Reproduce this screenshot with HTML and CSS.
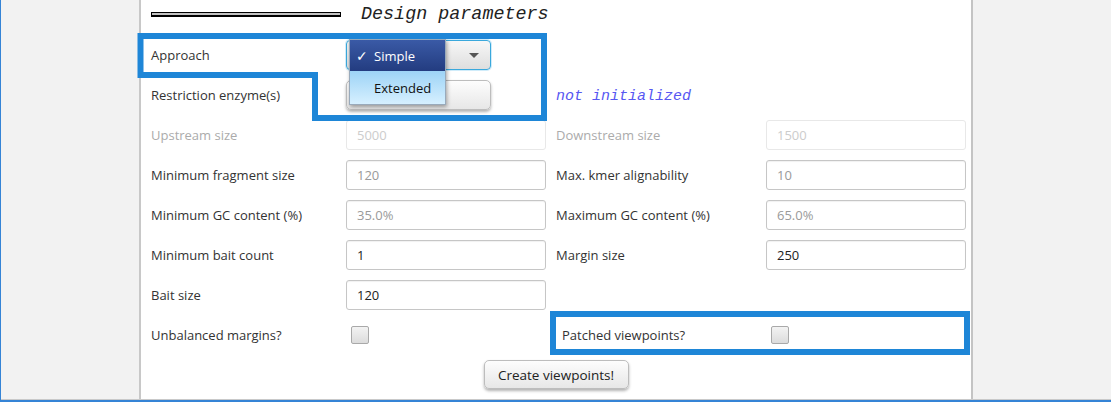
FILE: index.html
```html
<!DOCTYPE html>
<html lang="en">
<head>
<meta charset="utf-8">
<title>Design parameters</title>
<link rel="stylesheet" href="styles.css">
</head>
<body>
<div class="app">
  <div class="main">
    <section class="panel">
      <div class="header">
        <div class="rule"></div>
        <h2 class="title">Design parameters</h2>
      </div>
      <div class="form">
        <span class="lbl">Approach</span>
        <div class="combo-cell">
          <div class="combo"><span class="arrow"></span></div>
          <ul class="popup">
            <li class="item sel"><span class="check">✓</span><span class="txt">Simple</span></li>
            <li class="item alt"><span class="check"></span><span class="txt">Extended</span></li>
          </ul>
        </div>
        <span></span><span></span>

        <span class="lbl">Restriction enzyme(s)</span>
        <div><button class="btn enzyme" type="button"></button></div>
        <span class="status">not initialized</span><span></span>

        <span class="lbl off">Upstream size</span>
        <input class="field" type="text" value="5000" disabled>
        <span class="lbl off">Downstream size</span>
        <input class="field" type="text" value="1500" disabled>

        <span class="lbl">Minimum fragment size</span>
        <input class="field" type="text" placeholder="120">
        <span class="lbl">Max. kmer alignability</span>
        <input class="field" type="text" placeholder="10">

        <span class="lbl">Minimum GC content (%)</span>
        <input class="field" type="text" placeholder="35.0%">
        <span class="lbl">Maximum GC content (%)</span>
        <input class="field" type="text" placeholder="65.0%">

        <span class="lbl">Minimum bait count</span>
        <input class="field" type="text" value="1">
        <span class="lbl">Margin size</span>
        <input class="field" type="text" value="250">

        <span class="lbl">Bait size</span>
        <input class="field" type="text" value="120">
        <span></span><span></span>

        <span class="lbl">Unbalanced margins?</span>
        <div><span class="box"></span></div>
        <span class="lbl shift">Patched viewpoints?</span>
        <div><span class="box"></span></div>
      </div>
      <div class="actions">
        <button class="btn create" type="button">Create viewpoints!</button>
      </div>
    </section>
  </div>
  <svg class="annot" width="1111" height="402" viewBox="0 0 1111 402">
    <path d="M140.5 36 H544 V118 H315 V75 H140.5 Z" />
    <rect x="553" y="314" width="414" height="38" />
  </svg>
</div>
</body>
</html>
```

FILE: styles.css
```css
html, body {
  margin: 0;
  padding: 0;
}
body {
  width: 1111px;
  height: 402px;
  overflow: hidden;
  background: #f2f2f2;
  font-family: "Open Sans", "Noto Sans", sans-serif;
  font-size: 13px;
  color: #333;
}
.app {
  position: relative;
  width: 1110px;
  height: 400px;
  border-left: 1px solid #3584d6;
  border-bottom: 2px solid #3584d6;
}
.main {
  height: 399px;
  border-bottom: 1px solid #c9c9c9;
  padding-left: 138px;
}
.panel {
  height: 399px;
  box-sizing: border-box;
  background: #fff;
  border-left: 2px solid #c8c8c8;
  border-right: 2px solid #c4c4c4;
  width: 834px;
  padding-left: 10px;
}
.header {
  height: 28px;
  display: flex;
  align-items: center;
  gap: 20px;
  margin-bottom: 12px;
}
.rule {
  width: 188px;
  height: 2px;
  background: #c2c2c2;
  border: 1px solid #000;
  border-bottom-width: 2px;
  box-sizing: content-box;
  margin-top: 1px;
}
.title {
  margin: 0;
  font-family: "Liberation Mono", "Courier New", monospace;
  font-style: italic;
  font-weight: normal;
  font-size: 18.4px;
  color: #222;
}
.form {
  display: grid;
  grid-template-columns: 185px 200px 200px 200px;
  grid-auto-rows: 30px;
  column-gap: 10px;
  row-gap: 10px;
  align-items: center;
}
.lbl {
  color: #333;
  white-space: nowrap;
}
.lbl.off {
  color: #ababab;
}
.lbl.shift {
  padding-left: 6px;
}
.status {
  font-family: "Liberation Mono", "Courier New", monospace;
  font-style: italic;
  font-size: 15px;
  color: #5757f2;
  padding-top: 2px;
}
.field {
  box-sizing: border-box;
  width: 200px;
  height: 30px;
  margin: 0;
  padding: 0 10px;
  border: 1px solid #c6c6c6;
  border-radius: 3px;
  background: #fff;
  box-shadow: inset 0 1px 1px rgba(0,0,0,0.06);
  font-family: inherit;
  font-size: 13px;
  color: #222;
  outline: none;
}
.field::placeholder {
  color: #9a9a9a;
  opacity: 1;
}
.field:disabled {
  border-color: #e8e8e8;
  color: #cccccc;
  box-shadow: none;
}
.combo-cell {
  position: relative;
  height: 30px;
}
.combo {
  box-sizing: border-box;
  width: 145px;
  height: 30px;
  border: 1px solid #3aa8dc;
  border-radius: 4px;
  background: linear-gradient(#f7f7f7, #dedede);
  box-shadow: 0 0 0 1px rgba(120,200,240,0.35);
  position: relative;
}
.arrow {
  position: absolute;
  right: 11px;
  top: 12px;
  width: 0;
  height: 0;
  border-left: 5px solid transparent;
  border-right: 5px solid transparent;
  border-top: 5px solid #555;
}
.popup {
  position: absolute;
  left: 3px;
  top: -1px;
  width: 97px;
  margin: 0;
  padding: 0;
  list-style: none;
  box-shadow: 1px 2px 4px rgba(0,0,0,0.35);
  border: 1px solid #9ab;
  box-sizing: border-box;
  z-index: 2;
}
.item {
  display: flex;
  align-items: center;
  padding-left: 6px;
}
.item .check {
  width: 18px;
  font-family: "DejaVu Sans", sans-serif;
  font-size: 14px;
  font-weight: bold;
}
.item.sel {
  height: 31px;
  color: #fff;
  background: linear-gradient(#3a5aa6, #233c80);
}
.item.alt {
  height: 33px;
  color: #111;
  background: linear-gradient(#9dd3f6, #d6f0ff);
}
.btn {
  box-sizing: border-box;
  width: 145px;
  margin: 0;
  border: 1px solid #bdbdbd;
  border-radius: 5px;
  background: linear-gradient(#fdfdfd, #e7e7e7);
  box-shadow: 0 2px 3px rgba(0,0,0,0.3);
  font-family: inherit;
  font-size: 13.5px;
  color: #222;
}
.enzyme {
  height: 30px;
  display: block;
}
.actions {
  display: flex;
  justify-content: center;
  padding-right: 10px;
  margin-top: 10px;
}
.create {
  height: 29px;
  padding: 0;
}
.box {
  display: block;
  box-sizing: border-box;
  width: 18px;
  height: 18px;
  margin-left: 5px;
  border: 1px solid #a9a9a9;
  border-radius: 2px;
  background: linear-gradient(#f3f3f3, #dcdcdc);
}
.annot {
  position: absolute;
  left: -1px;
  top: 0;
  pointer-events: none;
  z-index: 5;
}
.annot path, .annot rect {
  fill: none;
  stroke: #1e86d7;
  stroke-width: 6;
}
```
